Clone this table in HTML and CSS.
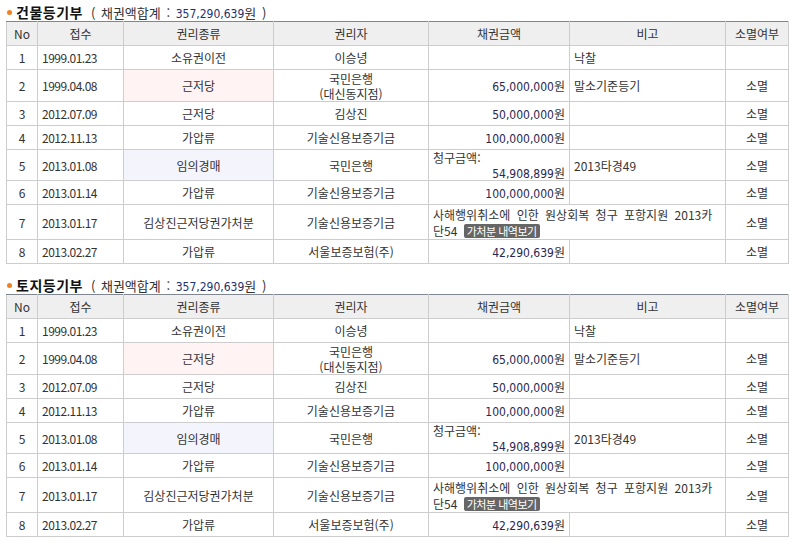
FILE: index.html
```html
<!DOCTYPE html>
<html lang="ko">
<head>
<meta charset="utf-8">
<title>등기부</title>
<link rel="stylesheet" href="styles.css">
</head>
<body>
<section class="section">
  <h2 class="title"><span class="dot"></span><strong class="name">건물등기부</strong><span class="sum">( 채권액합계 : <span class="num">357,290,639</span>원 )</span></h2>
  <table class="reg">
    <colgroup>
      <col class="c-no"><col class="c-date"><col class="c-kind"><col class="c-owner"><col class="c-amt"><col class="c-note"><col class="c-ext">
    </colgroup>
    <thead>
      <tr><th>No</th><th>접수</th><th>권리종류</th><th>권리자</th><th>채권금액</th><th>비고</th><th>소멸여부</th></tr>
    </thead>
    <tbody>
      <tr><td class="ctr">1</td><td class="date">1999.01.23</td><td class="ctr">소유권이전</td><td class="ctr">이승녕</td><td class="amt"></td><td class="note">낙찰</td><td class="ctr"></td></tr>
      <tr class="two"><td class="ctr">2</td><td class="date">1999.04.08</td><td class="ctr pink">근저당</td><td class="ctr">국민은행<br>(대신동지점)</td><td class="amt"><span class="num">65,000,000</span>원</td><td class="note">말소기준등기</td><td class="ctr">소멸</td></tr>
      <tr><td class="ctr">3</td><td class="date">2012.07.09</td><td class="ctr">근저당</td><td class="ctr">김상진</td><td class="amt"><span class="num">50,000,000</span>원</td><td class="note"></td><td class="ctr">소멸</td></tr>
      <tr><td class="ctr">4</td><td class="date">2012.11.13</td><td class="ctr">가압류</td><td class="ctr">기술신용보증기금</td><td class="amt"><span class="num">100,000,000</span>원</td><td class="note"></td><td class="ctr">소멸</td></tr>
      <tr class="claimrow"><td class="ctr">5</td><td class="date">2013.01.08</td><td class="ctr blue">임의경매</td><td class="ctr">국민은행</td><td class="amt"><span class="claim">청구금액:</span><span class="num">54,908,899</span>원</td><td class="note">2013타경49</td><td class="ctr">소멸</td></tr>
      <tr><td class="ctr">6</td><td class="date">2013.01.14</td><td class="ctr">가압류</td><td class="ctr">기술신용보증기금</td><td class="amt"><span class="num">100,000,000</span>원</td><td class="note"></td><td class="ctr">소멸</td></tr>
      <tr class="three"><td class="ctr">7</td><td class="date">2013.01.17</td><td class="ctr">김상진근저당권가처분</td><td class="ctr">기술신용보증기금</td><td class="note wide" colspan="2">사해행위취소에 인한 원상회복 청구 포항지원 2013카<br>단54 <span class="btn">가처분 내역보기</span></td><td class="ctr">소멸</td></tr>
      <tr><td class="ctr">8</td><td class="date">2013.02.27</td><td class="ctr">가압류</td><td class="ctr">서울보증보험(주)</td><td class="amt"><span class="num">42,290,639</span>원</td><td class="note"></td><td class="ctr">소멸</td></tr>
    </tbody>
  </table>
</section>
<section class="section second">
  <h2 class="title"><span class="dot"></span><strong class="name">토지등기부</strong><span class="sum">( 채권액합계 : <span class="num">357,290,639</span>원 )</span></h2>
  <table class="reg">
    <colgroup>
      <col class="c-no"><col class="c-date"><col class="c-kind"><col class="c-owner"><col class="c-amt"><col class="c-note"><col class="c-ext">
    </colgroup>
    <thead>
      <tr><th>No</th><th>접수</th><th>권리종류</th><th>권리자</th><th>채권금액</th><th>비고</th><th>소멸여부</th></tr>
    </thead>
    <tbody>
      <tr><td class="ctr">1</td><td class="date">1999.01.23</td><td class="ctr">소유권이전</td><td class="ctr">이승녕</td><td class="amt"></td><td class="note">낙찰</td><td class="ctr"></td></tr>
      <tr class="two"><td class="ctr">2</td><td class="date">1999.04.08</td><td class="ctr pink">근저당</td><td class="ctr">국민은행<br>(대신동지점)</td><td class="amt"><span class="num">65,000,000</span>원</td><td class="note">말소기준등기</td><td class="ctr">소멸</td></tr>
      <tr><td class="ctr">3</td><td class="date">2012.07.09</td><td class="ctr">근저당</td><td class="ctr">김상진</td><td class="amt"><span class="num">50,000,000</span>원</td><td class="note"></td><td class="ctr">소멸</td></tr>
      <tr><td class="ctr">4</td><td class="date">2012.11.13</td><td class="ctr">가압류</td><td class="ctr">기술신용보증기금</td><td class="amt"><span class="num">100,000,000</span>원</td><td class="note"></td><td class="ctr">소멸</td></tr>
      <tr class="claimrow"><td class="ctr">5</td><td class="date">2013.01.08</td><td class="ctr blue">임의경매</td><td class="ctr">국민은행</td><td class="amt"><span class="claim">청구금액:</span><span class="num">54,908,899</span>원</td><td class="note">2013타경49</td><td class="ctr">소멸</td></tr>
      <tr><td class="ctr">6</td><td class="date">2013.01.14</td><td class="ctr">가압류</td><td class="ctr">기술신용보증기금</td><td class="amt"><span class="num">100,000,000</span>원</td><td class="note"></td><td class="ctr">소멸</td></tr>
      <tr class="three"><td class="ctr">7</td><td class="date">2013.01.17</td><td class="ctr">김상진근저당권가처분</td><td class="ctr">기술신용보증기금</td><td class="note wide" colspan="2">사해행위취소에 인한 원상회복 청구 포항지원 2013카<br>단54 <span class="btn">가처분 내역보기</span></td><td class="ctr">소멸</td></tr>
      <tr><td class="ctr">8</td><td class="date">2013.02.27</td><td class="ctr">가압류</td><td class="ctr">서울보증보험(주)</td><td class="amt"><span class="num">42,290,639</span>원</td><td class="note"></td><td class="ctr">소멸</td></tr>
    </tbody>
  </table>
</section>
</body>
</html>
```

FILE: styles.css
```css
html, body {
  background: #ffffff;
}
body {
  margin: 0;
  padding: 4px 7px 0 6px;
  font-family: "Noto Sans CJK KR", "Noto Sans", sans-serif;
  font-size: 12px;
  color: #333333;
}
.section.second {
  margin-top: 13px;
}
.title {
  display: flex;
  align-items: center;
  height: 17px;
  margin: 0;
  font-size: 13px;
  font-weight: normal;
  line-height: 17px;
}
.dot {
  width: 5px;
  height: 5px;
  border-radius: 50%;
  background: #f08020;
  margin: 0 4px 0 1px;
}
.name {
  font-size: 14px;
  font-weight: bold;
  color: #111111;
  margin-right: 8px;
  letter-spacing: 0.5px;
}
.sum {
  color: #333333;
  word-spacing: 2px;
}
.sum .num {
  font-family: "DejaVu Sans Condensed", "DejaVu Sans", sans-serif;
  font-stretch: condensed;
  font-size: 12px;
  line-height: 10px;
  color: #1e3270;
  word-spacing: 0;
}
.reg {
  border-collapse: collapse;
  table-layout: fixed;
  width: 782px;
}
.c-no { width: 31px; }
.c-date { width: 86px; }
.c-kind { width: 150px; }
.c-owner { width: 155px; }
.c-amt { width: 141px; }
.c-note { width: 156px; }
.c-ext { width: 63px; }
.reg th,
.reg td {
  border: 1px solid #cdcdcd;
  height: 23px;
  padding: 0 4px;
  line-height: 15px;
  vertical-align: middle;
}
.reg th {
  background: #efefef;
  border-top: 1px solid #80868f;
  font-weight: normal;
  color: #333333;
  text-align: center;
}
.reg tr.two td {
  height: 31px;
}
.reg tr.claimrow td {
  height: 30px;
}
.reg tr.three td {
  height: 33px;
}
.ctr { text-align: center; }
.date { text-align: left; letter-spacing: -0.5px; }
.note { text-align: left; }
.amt { text-align: right; padding-right: 2px; }
.amt .claim {
  display: block;
  text-align: left;
}
.amt .num {
  font-family: "DejaVu Sans Condensed", "DejaVu Sans", sans-serif;
  font-stretch: condensed;
  font-size: 12px;
  line-height: 10px;
  color: #2a2850;
}
.pink { background: #fff3f3; }
.blue { background: #f4f4fd; }
.reg td.wide {
  line-height: 16px;
  padding: 1px 4px 0;
  word-spacing: 3px;
}
.btn {
  display: inline-block;
  vertical-align: top;
  margin-top: 1px;
  background: #666666;
  color: #ffffff;
  font-size: 11px;
  line-height: 14px;
  padding: 0 3px;
  border-radius: 2px;
  letter-spacing: -0.5px;
  word-spacing: 0;
}
```
